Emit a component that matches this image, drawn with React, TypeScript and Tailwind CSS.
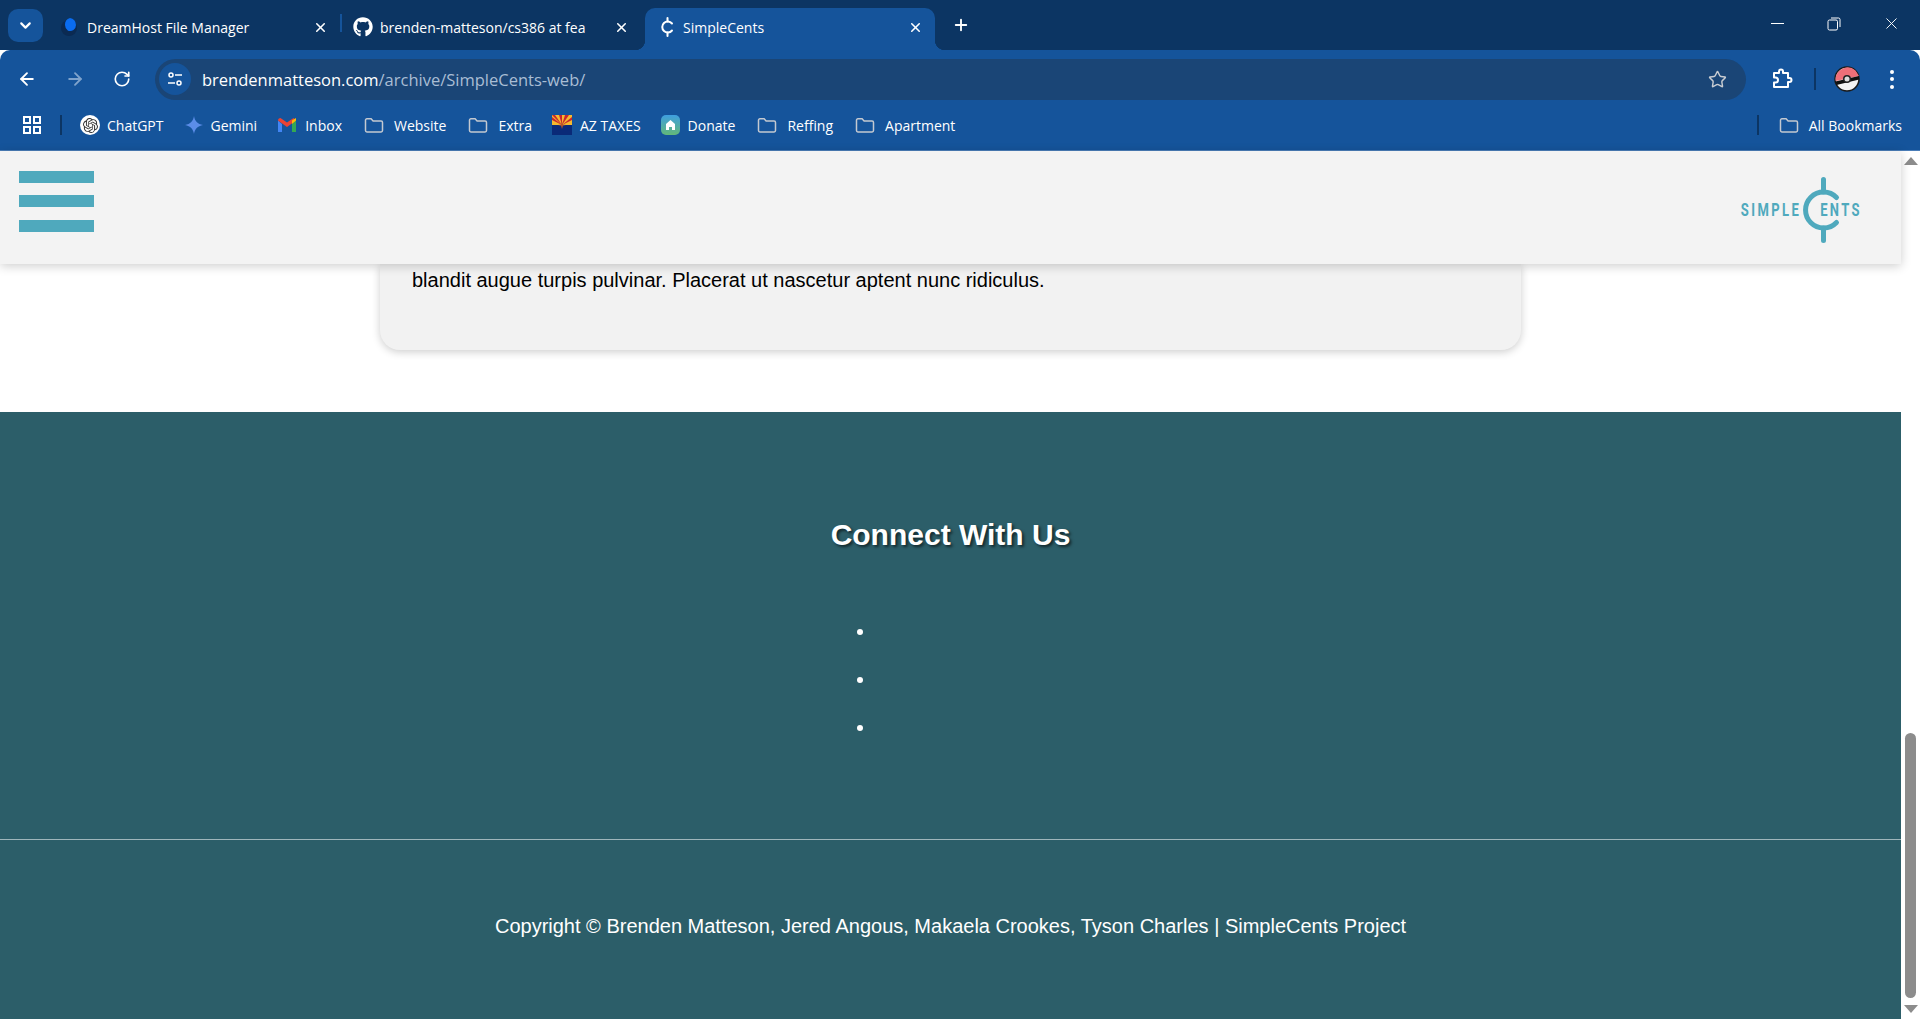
import { ArrowLeft, ArrowRight, ChevronDown, Plus, RotateCw, Star, X } from 'lucide-react';
import { FaGithub } from 'react-icons/fa';
import { SiOpenai } from 'react-icons/si';

const chromeFont = "font-['Open_Sans','Noto_Sans',sans-serif]";

function FolderIcon() {
  return (
    <svg width="20" height="18" viewBox="0 0 20 18" fill="none" stroke="#c4c9d1" strokeWidth="1.5" className="shrink-0">
      <path d="M1.5 4.2c0-.8.6-1.4 1.4-1.4h4.2l2 2.2h8c.8 0 1.4.6 1.4 1.4v8.2c0 .8-.6 1.4-1.4 1.4H2.9c-.8 0-1.4-.6-1.4-1.4z" />
    </svg>
  );
}

function Tab({ icon, title, active, width }: { icon: React.ReactNode; title: string; active?: boolean; width: string }) {
  return (
    <div className={`relative flex h-[42px] items-center pb-1 ${active ? 'rounded-t-[10px] bg-[#15549b]' : ''} ${width}`}>
      {active && (
        <>
          <span className="absolute bottom-0 -left-[10px] h-[10px] w-[10px] bg-[radial-gradient(circle_at_0_0,#0c3563_10px,#15549b_10.5px)]" />
          <span className="absolute bottom-0 -right-[10px] h-[10px] w-[10px] bg-[radial-gradient(circle_at_100%_0,#0c3563_10px,#15549b_10.5px)]" />
        </>
      )}
      <span className="flex w-[38px] shrink-0 justify-end pr-[7px]">{icon}</span>
      <span className="flex-1 overflow-hidden text-[14px] whitespace-nowrap text-white">{title}</span>
      <X size={15} strokeWidth={2.5} className="mr-[12px] ml-2 shrink-0 text-white" />
    </div>
  );
}

function DreamHostIcon() {
  return (
    <svg width="20" height="20" viewBox="0 0 20 20">
      <circle cx="9" cy="11" r="8" fill="#0b2a52" />
      <path d="M10 1a7 7 0 0 1 6 7 6 6 0 0 1-8 5.700A7 7 0 0 1 5 8a7 7 0 0 1 5-7z" fill="#0a6cf0" />
    </svg>
  );
}

function CentIcon() {
  return (
    <svg width="18" height="20" viewBox="0 0 18 20" fill="none" stroke="#fff" strokeWidth="2" strokeLinecap="round">
      <path d="M14 6.500a5.500 5.500 0 1 0 0 7" />
      <path d="M9.500 1v3.500M9.500 15.500V19" />
    </svg>
  );
}

function TuneIcon() {
  return (
    <svg width="16" height="16" viewBox="0 0 16 16" fill="none" stroke="#fff" strokeWidth="1.500">
      <circle cx="4" cy="4" r="2" />
      <path d="M8 4h7M1 12h7" />
      <circle cx="12" cy="12" r="2" />
    </svg>
  );
}

function PuzzleIcon() {
  return (
    <svg width="22" height="22" viewBox="0 0 22 22" fill="none" stroke="#fff" strokeWidth="2" strokeLinejoin="round">
      <path d="M3 5h5V3.500a2 2 0 0 1 4 0V5h5v5h1.500a2 2 0 0 1 0 4H17v5H3v-4.500h1.500a2.500 2.500 0 0 0 0-5H3z" />
    </svg>
  );
}

function Pokeball() {
  return (
    <svg width="26" height="26" viewBox="0 0 26 26">
      <circle cx="13" cy="13" r="12" fill="#f4f4f4" stroke="#1a1a1a" strokeWidth="1.500" />
      <path d="M1.700 15A12 12 0 0 1 21.500 4.500L25 10z" fill="#ef6f78" />
      <path d="M1.500 15.500 24.800 10l.4 3.500L2.500 19z" fill="#111" />
      <circle cx="13" cy="13" r="4" fill="#222" />
      <circle cx="13" cy="13" r="2.500" fill="#ddd" />
    </svg>
  );
}

function GeminiIcon() {
  return (
    <svg width="18" height="18" viewBox="0 0 18 18">
      <path d="M9 0c.8 5 3.500 8 9 9-5.500 1-8.200 4-9 9-.8-5-3.500-8-9-9 5.500-1 8.200-4 9-9z" fill="#5b8de8" />
    </svg>
  );
}

function GmailIcon() {
  return (
    <svg width="18" height="14" viewBox="0 0 18 14">
      <path d="M0 2.500V14h4V6z" fill="#4285f4" />
      <path d="M18 2.500V14h-4V6z" fill="#34a853" />
      <path d="M0 2.500 9 9l9-6.500L15.500 0 9 4.500 2.500 0C1 0 0 1 0 2.500z" fill="#ea4335" />
      <path d="M14 6v-3.600L18 0v2.500z" fill="#fbbc04" />
    </svg>
  );
}

function ArizonaFlag() {
  return (
    <svg width="20" height="20" viewBox="0 0 20 20">
      <rect width="20" height="20" fill="#0a2a78" />
      <rect width="20" height="10" fill="#f5b82e" />
      <path d="M10 10 0 2v3l10 5L3 0H0zM10 10l10-8v3zM10 10 7 0h3zM10 10l7-10h-4z" fill="#c8262e" />
      <path d="M10 6.500 11 9.500 14 10 11 10.800 10 14 9 10.800 6 10 9 9.500z" fill="#b5532a" />
    </svg>
  );
}

function DonateIcon() {
  return (
    <svg width="19" height="20" viewBox="0 0 19 20">
      <defs>
        <linearGradient id="donate" x1="0" y1="0" x2="0" y2="1">
          <stop offset="0" stopColor="#3f9fe0" />
          <stop offset="1" stopColor="#62b878" />
        </linearGradient>
      </defs>
      <rect width="19" height="20" rx="5" fill="url(#donate)" />
      <path d="M9.500 5 14 9v6h-3v-3H8v3H5V9z" fill="#fff" />
    </svg>
  );
}

function Bookmark({ icon, label, className }: { icon: React.ReactNode; label: string; className: string }) {
  return (
    <div className={`flex items-center ${className}`}>
      {icon}
      <span className="text-[14px] whitespace-nowrap text-white">{label}</span>
    </div>
  );
}

function Logo() {
  const letters = "inline-block scale-y-[1.4] font-['Roboto',sans-serif] text-[13px] font-bold tracking-[2.4px] text-[#4fa9bd]";
  return (
    <div className="flex items-center">
      <span className={letters}>SIMPLE</span>
      <svg width="38" height="68" viewBox="0 0 38 68" fill="none" stroke="#4fa9bd" strokeWidth="5" strokeLinecap="round" className="-mr-[21px] ml-[2px]">
        <path d="M33.500 21.500a18 18 0 1 0 0 25" />
        <path d="M20.500 3.500V16M20.500 52v12.500" />
      </svg>
      <span className={letters}>ENTS</span>
    </div>
  );
}

export default function App() {
  return (
    <div className={`flex h-[1020px] w-full flex-col overflow-hidden bg-white ${chromeFont}`}>
      {/* tab strip */}
      <div className="flex h-[50px] shrink-0 items-end bg-[#0c3563] pr-[19px] pl-[8px]">
        <div className="mr-[6px] mb-[8px] flex h-[33px] w-[35px] items-center justify-center rounded-[10px] bg-[#15549b]">
          <ChevronDown size={17} strokeWidth={3} className="text-white" />
        </div>
        <div className="flex">
          <Tab icon={<DreamHostIcon />} title="DreamHost File Manager" width="w-[291px]" />
          <div className="mt-[6px] mb-[18px] h-[18px] w-[2px] bg-[#15549b]" />
          <Tab icon={<FaGithub size={20} color="#fff" />} title="brenden-matteson/cs386 at fea" width="w-[299px]" />
        </div>
        <div className="ml-[4px]">
          <Tab active icon={<CentIcon />} title="SimpleCents" width="w-[290px]" />
        </div>
        <Plus size={18} strokeWidth={2.5} className="mb-[16px] ml-[17px] text-white" />
        <div className="flex-1" />
        <div className="mb-[17px] flex items-center text-white">
          <div className="h-px w-[13px] bg-white" />
          <svg width="14" height="14" viewBox="0 0 14 14" fill="none" stroke="#fff" className="ml-[43px]">
            <rect x="1" y="3" width="9.500" height="10" rx="1.500" />
            <path d="M4 1h7.500A1.500 1.500 0 0 1 13 2.500V10" />
          </svg>
          <X size={19} strokeWidth={1.2} className="ml-[41px]" />
        </div>
      </div>

      {/* toolbar */}
      <div className="flex h-[50px] shrink-0 items-center rounded-t-[10px] bg-[#15549b] pt-[8px]">
        <ArrowLeft size={20} strokeWidth={2.2} className="ml-[17px] text-white" />
        <ArrowRight size={20} strokeWidth={2.2} className="ml-[28px] text-[#7fa3cc]" />
        <RotateCw size={18} strokeWidth={2.2} className="ml-[28px] text-white" />
        <div className="ml-[24px] flex h-[41px] w-[1591px] items-center rounded-full bg-[#1a4576] pl-[4px]">
          <div className="flex h-[32px] w-[32px] items-center justify-center rounded-full bg-[#15549b]">
            <TuneIcon />
          </div>
          <span className="ml-[11px] pt-[2px] text-[16.5px] text-white">
            brendenmatteson.com<span className="text-[#a9bdd4]">/archive/SimpleCents-web/</span>
          </span>
          <div className="flex-1" />
          <Star size={19} strokeWidth={1.8} className="mr-[19px] text-[#c8ccd2]" />
        </div>
        <div className="ml-[25px]">
          <PuzzleIcon />
        </div>
        <div className="ml-[21px] h-[22px] w-[2px] bg-[#0c3563]" />
        <div className="ml-[18px]">
          <Pokeball />
        </div>
        <div className="ml-[30px] flex flex-col gap-[3.5px]">
          <span className="h-[4px] w-[4px] rounded-full bg-white" />
          <span className="h-[4px] w-[4px] rounded-full bg-white" />
          <span className="h-[4px] w-[4px] rounded-full bg-white" />
        </div>
      </div>

      {/* bookmarks bar */}
      <div className="flex h-[51px] shrink-0 items-center border-b border-[#4a7db8] bg-[#15549b] pl-[22px]">
        <svg width="20" height="20" viewBox="0 0 20 20" fill="none" stroke="#fff" strokeWidth="2">
          <rect x="2" y="2" width="6" height="6" />
          <rect x="12" y="2" width="6" height="6" />
          <rect x="2" y="12" width="6" height="6" />
          <rect x="12" y="12" width="6" height="6" />
        </svg>
        <div className="mr-[18px] ml-[18px] h-[20px] w-[2px] bg-[#0c3563]" />
        <Bookmark className="gap-[7px]" label="ChatGPT" icon={<span className="flex h-[20px] w-[20px] items-center justify-center rounded-full bg-white"><SiOpenai size={15} color="#333" /></span>} />
        <Bookmark className="ml-[21px] gap-[8px]" label="Gemini" icon={<GeminiIcon />} />
        <Bookmark className="ml-[21px] gap-[9px]" label="Inbox" icon={<GmailIcon />} />
        <Bookmark className="ml-[22px] gap-[10px]" label="Website" icon={<FolderIcon />} />
        <Bookmark className="ml-[22px] gap-[10px]" label="Extra" icon={<FolderIcon />} />
        <Bookmark className="ml-[20px] gap-[8px]" label="AZ TAXES" icon={<ArizonaFlag />} />
        <Bookmark className="ml-[20px] gap-[8px]" label="Donate" icon={<DonateIcon />} />
        <Bookmark className="ml-[22px] gap-[10px]" label="Reffing" icon={<FolderIcon />} />
        <Bookmark className="ml-[22px] gap-[10px]" label="Apartment" icon={<FolderIcon />} />
        <div className="flex-1" />
        <div className="mr-[20px] h-[20px] w-[2px] bg-[#0c3563]" />
        <Bookmark className="mr-[18px] gap-[10px]" label="All Bookmarks" icon={<FolderIcon />} />
      </div>

      {/* page */}
      <div className="flex min-h-0 flex-1">
        <div className="flex min-w-0 flex-1 flex-col font-['Liberation_Sans',Arial,sans-serif]">
          <header className="relative z-10 flex h-[113px] shrink-0 items-start justify-between bg-[#f3f3f3] pt-[20px] pr-[39px] pl-[19px] shadow-[0_2px_10px_rgba(0,0,0,0.2)]">
            <div className="flex flex-col">
              <div className="h-[12px] w-[75px] bg-[#4fa9bd]" />
              <div className="mt-[12px] h-[12px] w-[75px] bg-[#4fa9bd]" />
              <div className="mt-[13px] h-[12px] w-[75px] bg-[#4fa9bd]" />
            </div>
            <div className="mt-[5px]">
              <Logo />
            </div>
          </header>

          <div className="h-[148px] shrink-0 px-[380px]">
            <div className="h-[86px] rounded-b-[20px] bg-[#f2f2f2] px-[32px] pt-[2px] shadow-[0_2px_8px_rgba(0,0,0,0.2)]">
              <p className="text-[20px] leading-[28px] text-black">
                blandit augue turpis pulvinar. Placerat ut nascetur aptent nunc ridiculus.
              </p>
            </div>
          </div>

          <footer className="flex flex-1 flex-col bg-[#2c5e69] text-white">
            <h2 className="mt-[105px] text-center text-[30px] leading-[36px] font-bold [text-shadow:2px_2px_3px_rgba(0,0,0,0.6)]">
              Connect With Us
            </h2>
            <ul className="mx-auto mt-[63px] w-[238px] list-disc pl-[44px] text-[20px] text-white">
              <li className="h-[48px]" />
              <li className="h-[48px]" />
              <li className="h-[48px]" />
            </ul>
            <hr className="mt-[79px] border-t border-[#9fb6bb]" />
            <p className="mt-[72px] text-center text-[20px] leading-[28px]">
              Copyright © Brenden Matteson, Jered Angous, Makaela Crookes, Tyson Charles | SimpleCents Project
            </p>
          </footer>
          <div className="h-px shrink-0 bg-white" />
        </div>

        {/* scrollbar */}
        <div className="flex w-[19px] shrink-0 flex-col items-center bg-white pt-[6px]">
          <div className="h-0 w-0 border-x-[7px] border-b-[8px] border-x-transparent border-b-[#8c8c8c]" />
          <div className="mt-[568px] h-[265px] w-[11px] rounded-full bg-[#8c8c8c]" />
          <div className="mt-[7px] h-0 w-0 border-x-[7px] border-t-[8px] border-x-transparent border-t-[#8c8c8c]" />
        </div>
      </div>
    </div>
  );
}
